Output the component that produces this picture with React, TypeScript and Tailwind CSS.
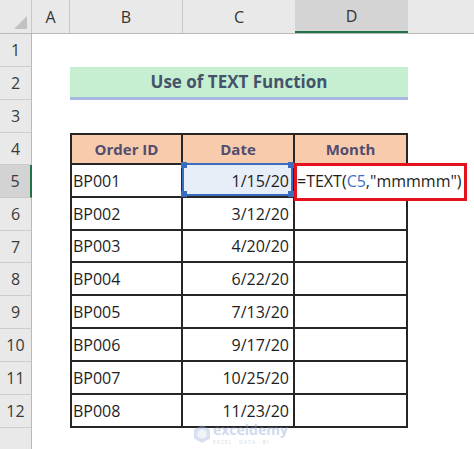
import { useState } from 'react';

type Row = { n: number; h: string; id?: string; date?: string };

const rows: Row[] = [
    { n: 1, h: 'h-[33px]' },
    { n: 2, h: 'h-[33px]' },
    { n: 3, h: 'h-[33px]' },
    { n: 4, h: 'h-[32px]' },
    { n: 5, h: 'h-[33px]', id: 'BP001', date: '1/15/20' },
    { n: 6, h: 'h-[33px]', id: 'BP002', date: '3/12/20' },
    { n: 7, h: 'h-[32px]', id: 'BP003', date: '4/20/20' },
    { n: 8, h: 'h-[33px]', id: 'BP004', date: '6/22/20' },
    { n: 9, h: 'h-[33px]', id: 'BP005', date: '7/13/20' },
    { n: 10, h: 'h-[33px]', id: 'BP006', date: '9/17/20' },
    { n: 11, h: 'h-[33px]', id: 'BP007', date: '10/25/20' },
    { n: 12, h: 'h-[33px]', id: 'BP008', date: '11/23/20' },
];

function RowHeader({ n }: { n: number }) {
    const active = n === 5;
    return (
        <div
            className={
                active
                    ? 'w-[32px] shrink-0 flex items-center justify-center bg-[#d3d3d3] border-b border-[#c9c9c9] border-r-2 border-r-[#217346] text-[16px] text-[#3a3a3a]'
                    : 'w-[32px] shrink-0 flex items-center justify-center bg-[#e9e9e9] border-b border-[#cdcdcd] border-r border-r-[#b9b9b9] text-[16px] text-[#3a3a3a]'
            }
        >
            {n}
        </div>
    );
}

function Handle({ pos }: { pos: string }) {
    return <div className={`absolute w-[6px] h-[6px] bg-[#3a6cc0] ${pos}`} />;
}

export default function App() {
    const [formula] = useState('mmmmm');

    return (
        <div className="relative w-[474px] h-[449px] overflow-hidden bg-white font-['Open_Sans',sans-serif]">
            {/* column headers */}
            <div className="flex h-[34px] bg-[#e9e9e9] border-b border-[#b9b9b9] text-[16px] text-[#333]">
                <div className="w-[32px] shrink-0 border-r border-[#c8c8c8] flex items-end justify-end pr-[4px] pb-[4px]">
                    <svg width="13" height="13" viewBox="0 0 13 13">
                        <polygon points="0,13 13,13 13,0" fill="#c2c2c2" />
                    </svg>
                </div>
                <div className="w-[38px] shrink-0 border-r border-[#c8c8c8] flex items-center justify-center">A</div>
                <div className="w-[113px] shrink-0 border-r border-[#c8c8c8] flex items-center justify-center">B</div>
                <div className="w-[112px] shrink-0 flex items-center justify-center">C</div>
                <div className="w-[113px] shrink-0 bg-[#d4d4d4] border-b-2 border-[#217346] flex items-center justify-center">D</div>
                <div className="flex-1" />
            </div>

            {rows.map((r) => (
                <div key={r.n} className={`flex ${r.h}`}>
                    <RowHeader n={r.n} />
                    <div className="w-[38px] shrink-0" />

                    {r.n === 2 && (
                        <div className="w-[338px] shrink-0 bg-[#c6eed0] border-b-[3px] border-[#a8b7e2] flex items-center justify-center font-bold text-[17px] text-[#43536b]">
                            Use of TEXT Function
                        </div>
                    )}

                    {r.n === 4 && (
                        <>
                            <div className="w-[113px] shrink-0 bg-[#f8cbad] border-2 border-[#262626] flex items-center justify-center font-bold text-[15px] text-[#514d6e]">
                                Order ID
                            </div>
                            <div className="w-[112px] shrink-0 bg-[#f8cbad] border-t-2 border-r-2 border-b-2 border-[#262626] flex items-center justify-center font-bold text-[15px] text-[#514d6e]">
                                Date
                            </div>
                            <div className="w-[113px] shrink-0 bg-[#f8cbad] border-t-2 border-r-2 border-b-2 border-[#262626] flex items-center justify-center font-bold text-[15px] text-[#514d6e]">
                                Month
                            </div>
                        </>
                    )}

                    {r.id && (
                        <>
                            <div className="w-[113px] shrink-0 border-l-2 border-r-2 border-b-2 border-[#262626] flex items-center pl-[1px] text-[16px] text-[#1e1e1e]">
                                {r.id}
                            </div>
                            <div
                                className={
                                    r.n === 5
                                        ? 'relative w-[112px] shrink-0 bg-[#e8eef8] border-r-2 border-b-2 border-[#262626] flex items-center justify-end pr-[4px] text-[16px] text-[#1e1e1e]'
                                        : 'w-[112px] shrink-0 border-r-2 border-b-2 border-[#262626] flex items-center justify-end pr-[4px] text-[16px] text-[#1e1e1e]'
                                }
                            >
                                {r.date}
                                {r.n === 5 && (
                                    <div className="absolute -left-[1px] -top-[2px] right-0 bottom-0 border-2 border-[#3a6cc0]">
                                        <Handle pos="-left-[3px] -top-[3px]" />
                                        <Handle pos="-left-[3px] -bottom-[3px]" />
                                        <Handle pos="-right-[3px] -top-[3px]" />
                                        <Handle pos="-right-[3px] -bottom-[3px]" />
                                    </div>
                                )}
                            </div>
                            <div className="relative w-[113px] shrink-0 border-r-2 border-b-2 border-[#262626] flex items-center pl-[2px] text-[16px] text-[#1e1e1e] whitespace-nowrap">
                                {r.n === 5 && (
                                    <>
                                        <span className="relative z-20">
                                            =TEXT(<span className="text-[#3f6fc4]">C5</span>,"{formula}")
                                        </span>
                                        <span className="relative z-20 ml-[2px] w-[1px] h-[20px] bg-[#222]" />
                                        <div className="absolute z-10 -left-[1px] -top-[2px] w-[173px] h-[38px] border-[3px] border-[#e3121c] bg-white" />
                                    </>
                                )}
                            </div>
                        </>
                    )}
                </div>
            ))}

            {/* row 13, cut off */}
            <div className="flex h-[21px]">
                <div className="w-[32px] shrink-0 bg-[#e9e9e9] border-r border-[#b9b9b9]" />
            </div>

            {/* watermark */}
            <div className="absolute left-[194px] top-[422px] flex items-center gap-[3px] opacity-40 pointer-events-none">
                <svg width="16" height="18" viewBox="0 0 16 18">
                    <polygon points="8,0 16,4.5 16,13.5 8,18 0,13.5 0,4.5" fill="#9fb0d6" />
                    <polygon points="8,4 12.5,6.5 12.5,11.5 8,14 3.5,11.5 3.5,6.5" fill="#dbe3f3" />
                </svg>
                <div className="flex flex-col gap-[2px]">
                    <span className="text-[14px] leading-[15px] font-bold text-[#8ea2d0]">exceldemy</span>
                    <span className="text-[5px] leading-[6px] tracking-[1px] text-[#8ea2d0]">EXCEL · DATA · BI</span>
                </div>
            </div>
        </div>
    );
}
